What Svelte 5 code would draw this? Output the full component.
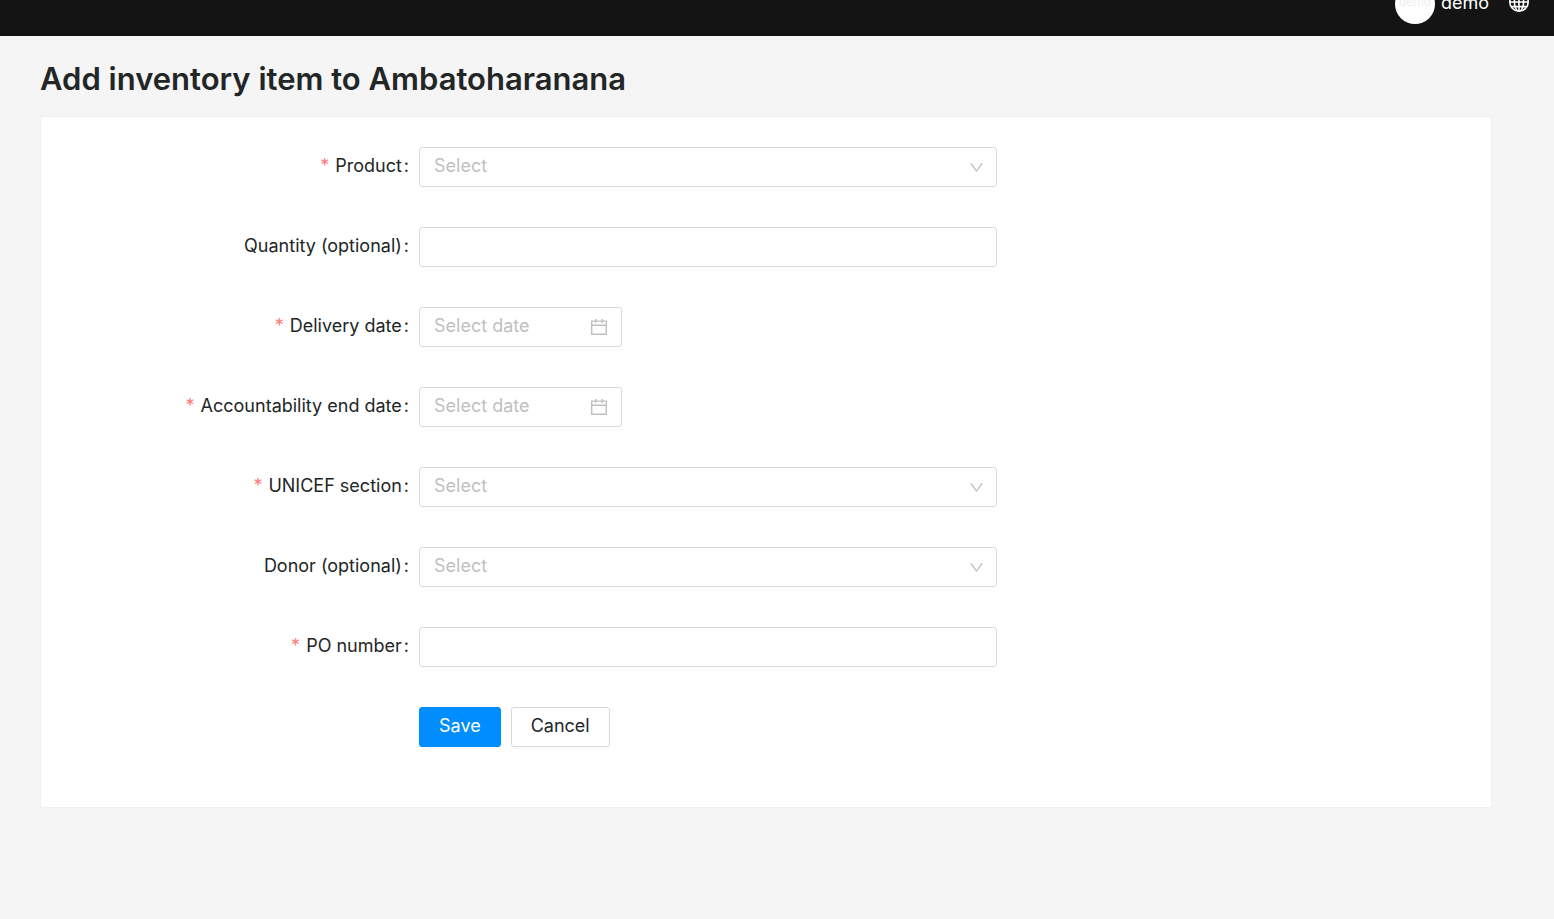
<script>
  const fields = [
    { id: 'product', label: 'Product', kind: 'select', required: true },
    { id: 'quantity', label: 'Quantity (optional)', kind: 'text', required: false },
    { id: 'delivery', label: 'Delivery date', kind: 'date', required: true },
    { id: 'accountability', label: 'Accountability end date', kind: 'date', required: true },
    { id: 'section', label: 'UNICEF section', kind: 'select', required: true },
    { id: 'donor', label: 'Donor (optional)', kind: 'select', required: false },
    { id: 'po', label: 'PO number', kind: 'text', required: true }
  ];
</script>

<header class="topbar">
  <a class="user" href="#account">
    <span class="avatar">demo</span>
    <span class="name">demo</span>
  </a>
  <button class="globe" type="button" aria-label="Language">
    <svg viewBox="0 0 20 20" width="20" height="20" fill="none" stroke="#fff" stroke-width="1.6">
      <circle cx="10" cy="10" r="9.2" />
      <ellipse cx="10" cy="10" rx="4.6" ry="9.2" />
      <path d="M10 1v18M1 10h18M2.6 5.4h14.800M2.6 14.6h14.800" />
    </svg>
  </button>
</header>

<main>
  <h1>Add inventory item to Ambatoharanana</h1>
  <form class="card" onsubmit={(e) => e.preventDefault()}>
    {#each fields as f}
      <div class="row">
        <label for={f.id}>
          {#if f.required}<span class="star">*</span>{/if}<span>{f.label}</span><span class="colon">:</span>
        </label>
        <div class="control" class:date={f.kind === 'date'}>
          {#if f.kind === 'select'}
            <select id={f.id}><option value="">Select</option></select>
            <svg class="icon" viewBox="64 64 896 896" width="15" height="15" fill="currentColor" aria-hidden="true">
              <path d="M884 256h-75c-5.100 0-9.900 2.500-12.900 6.600L512 654.200 227.900 262.600c-3-4.100-7.800-6.600-12.900-6.600h-75c-6.500 0-10.300 7.400-6.500 12.700l352.600 486.100c12.800 17.600 39 17.600 51.700 0l352.600-486.100c3.900-5.300.1-12.700-6.400-12.700z" />
            </svg>
          {:else if f.kind === 'date'}
            <input id={f.id} type="text" placeholder="Select date" />
            <svg class="icon" viewBox="64 64 896 896" width="18" height="18" fill="currentColor" aria-hidden="true">
              <path d="M880 184H712v-64c0-4.400-3.600-8-8-8h-56c-4.400 0-8 3.600-8 8v64H384v-64c0-4.400-3.600-8-8-8h-56c-4.400 0-8 3.600-8 8v64H144c-17.700 0-32 14.300-32 32v664c0 17.700 14.300 32 32 32h736c17.700 0 32-14.300 32-32V216c0-17.700-14.300-32-32-32zm-40 656H184V460h656v380zM184 392V256h128v48c0 4.400 3.600 8 8 8h56c4.400 0 8-3.600 8-8v-48h256v48c0 4.400 3.600 8 8 8h56c4.400 0 8-3.600 8-8v-48h128v136H184z" />
            </svg>
          {:else}
            <input id={f.id} type="text" />
          {/if}
        </div>
      </div>
    {/each}
    <div class="row">
      <div class="actions">
        <button class="btn primary" type="submit">Save</button>
        <button class="btn" type="button">Cancel</button>
      </div>
    </div>
  </form>
</main>

<style>
  :global(body) {
    background: #f5f5f5;
    color: #222626;
    font-family: Inter, 'Open Sans', sans-serif;
    font-size: 18px;
  }
  .topbar {
    display: flex;
    justify-content: flex-end;
    align-items: flex-end;
    gap: 20px;
    height: 36px;
    padding: 0 25px 12px;
    box-sizing: border-box;
    overflow: hidden;
    background: #141414;
  }
  .user {
    display: flex;
    align-items: center;
    gap: 6px;
    color: #fff;
    text-decoration: none;
  }
  .avatar {
    width: 40px;
    height: 40px;
    border-radius: 50%;
    background: #fff;
    color: #eee;
    font-size: 12px;
    line-height: 36px;
    text-align: center;
  }
  .name {
    line-height: 24px;
    padding-bottom: 2px;
  }
  .globe {
    display: flex;
    margin-bottom: 12px;
    padding: 0;
    border: 0;
    background: none;
  }
  main {
    padding: 20px 62px 0 40px;
  }
  h1 {
    margin: 0 0 14px;
    font-size: 31px;
    line-height: 46px;
    font-weight: 600;
  }
  .card {
    padding: 30px 31px 60px;
    border: 1px solid #f0f0f0;
    border-radius: 3px;
    background: #fff;
  }
  .row {
    display: grid;
    grid-template-columns: 25% 41.6667%;
    margin-bottom: 40px;
  }
  .row:last-child {
    margin-bottom: 0;
  }
  label {
    display: flex;
    justify-content: flex-end;
    padding-right: 10px;
    line-height: 37px;
    white-space: nowrap;
  }
  .star {
    margin-right: 6px;
    color: #ff7a7d;
  }
  .colon {
    margin-left: 2px;
  }
  .control {
    position: relative;
    height: 40px;
  }
  .control.date {
    width: 203px;
  }
  input,
  select {
    display: block;
    width: 100%;
    height: 40px;
    padding: 0 14px 4px;
    box-sizing: border-box;
    border: 1px solid #d9d9d9;
    border-radius: 3px;
    background: #fff;
    font: inherit;
    color: #222626;
    appearance: none;
  }
  select,
  input::placeholder {
    color: #bfbfbf;
    opacity: 1;
  }
  .icon {
    position: absolute;
    top: 0;
    bottom: 0;
    right: 13px;
    margin: auto 0;
    color: #bfbfbf;
    pointer-events: none;
  }
  .control.date .icon {
    right: 14px;
  }
  .actions {
    grid-column: 2;
    display: flex;
    gap: 10px;
  }
  .btn {
    height: 40px;
    padding: 0 19px 4px;
    border: 1px solid #d9d9d9;
    border-radius: 3px;
    background: #fff;
    color: #222626;
    font: inherit;
    box-shadow: 0 2px 0 rgba(0, 0, 0, 0.02);
  }
  .primary {
    border-color: #008dff;
    background: #008dff;
    color: #fff;
  }
</style>
